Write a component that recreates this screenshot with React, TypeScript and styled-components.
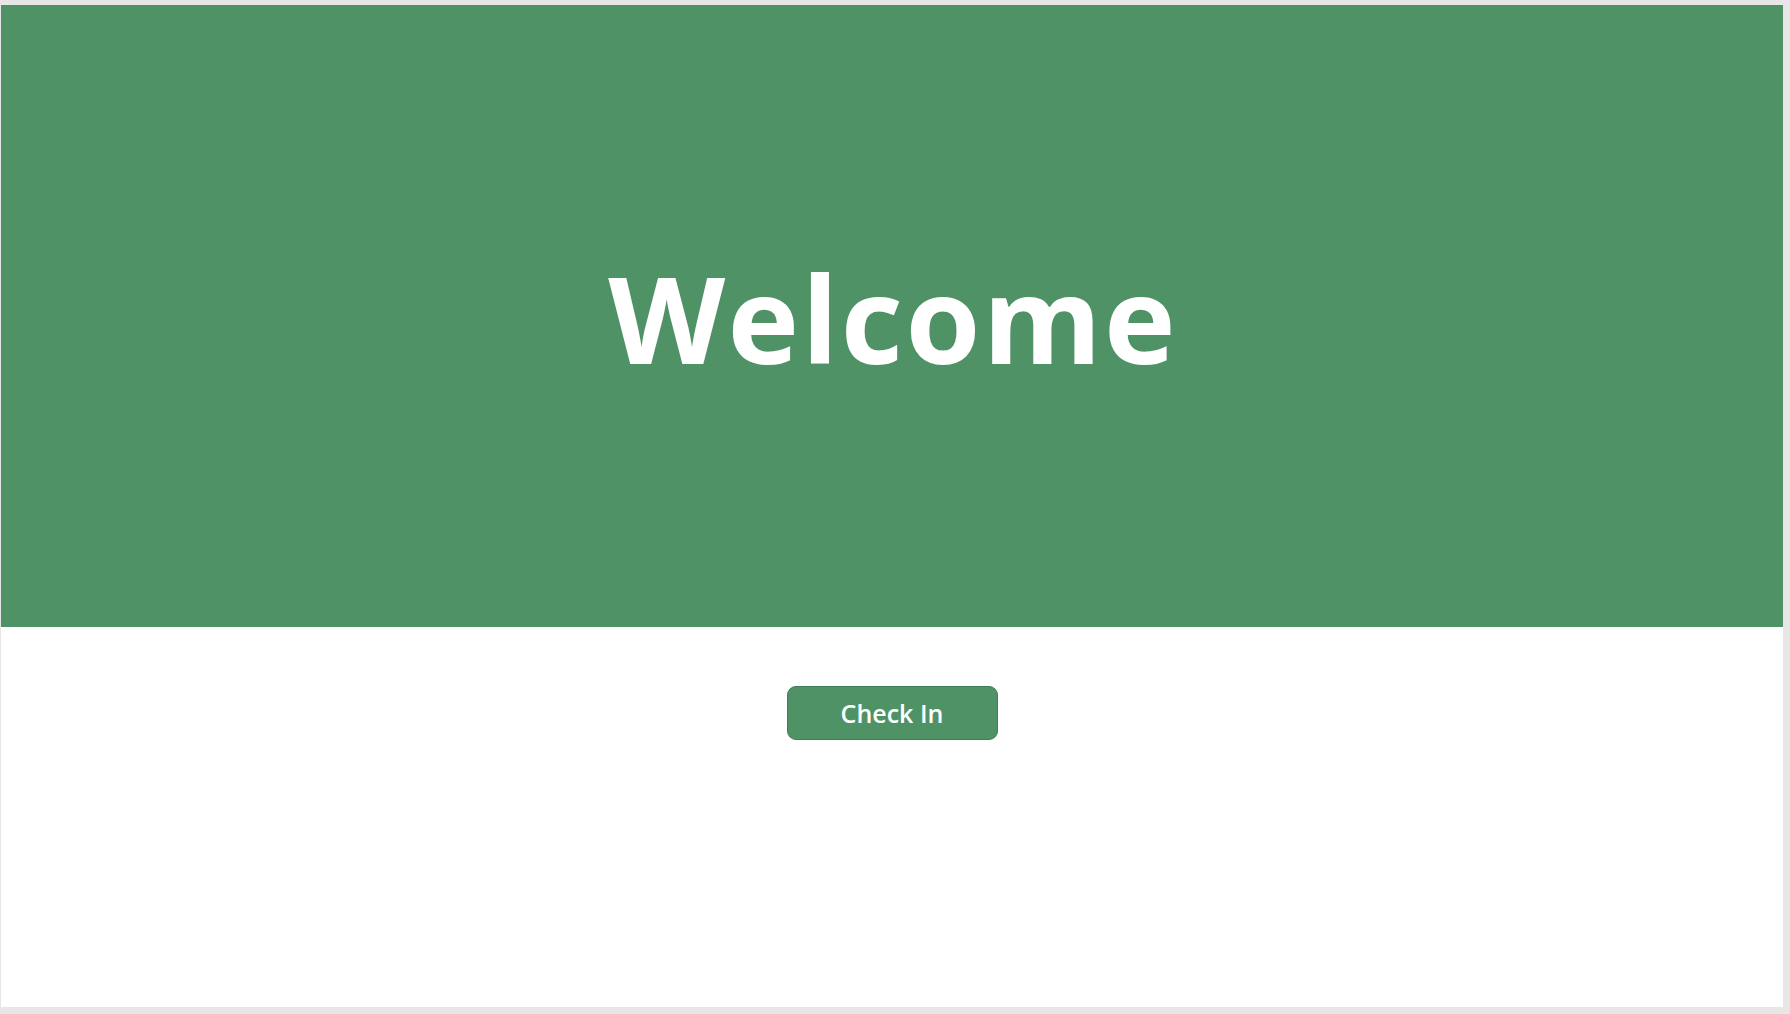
import React from "react";
import styled, { createGlobalStyle } from "styled-components";

const Global = createGlobalStyle`
  html, body { margin: 0; padding: 0; background: #e6e6e6; }
  body { font-family: "Open Sans", "Liberation Sans", sans-serif; }
`;

const Page = styled.div`
  width: 1790px;
  height: 1014px;
  box-sizing: border-box;
  padding: 5px 7px 7px 1px;
  display: flex;
`;

const Screen = styled.main`
  flex: 1;
  background: #ffffff;
  display: flex;
  flex-direction: column;
`;

const Banner = styled.header`
  height: 622px;
  background: #4e9266;
  display: flex;
  align-items: center;
  justify-content: center;
`;

const Title = styled.h1`
  margin: 0 -2px 0 0;
  color: #ffffff;
  font-family: "Open Sans", "Liberation Sans", sans-serif;
  font-weight: 700;
  font-size: 121px;
  letter-spacing: 2.4px;
  line-height: 1;
  transform: translateY(1px);
`;

const Body = styled.section`
  flex: 1;
  display: flex;
  justify-content: center;
  align-items: flex-start;
  padding-top: 59px;
`;

const Button = styled.button`
  width: 211px;
  height: 54px;
  border: 1px solid #3f7f56;
  border-radius: 9px;
  background: #4e9266;
  color: #ffffff;
  font-family: "Open Sans", "Liberation Sans", sans-serif;
  font-weight: 600;
  font-size: 25px;
  cursor: pointer;
  padding: 0;
`;

export default function App() {
  return (
    <>
      <Global />
      <Page>
        <Screen>
          <Banner>
            <Title>Welcome</Title>
          </Banner>
          <Body>
            <Button>Check In</Button>
          </Body>
        </Screen>
      </Page>
    </>
  );
}
